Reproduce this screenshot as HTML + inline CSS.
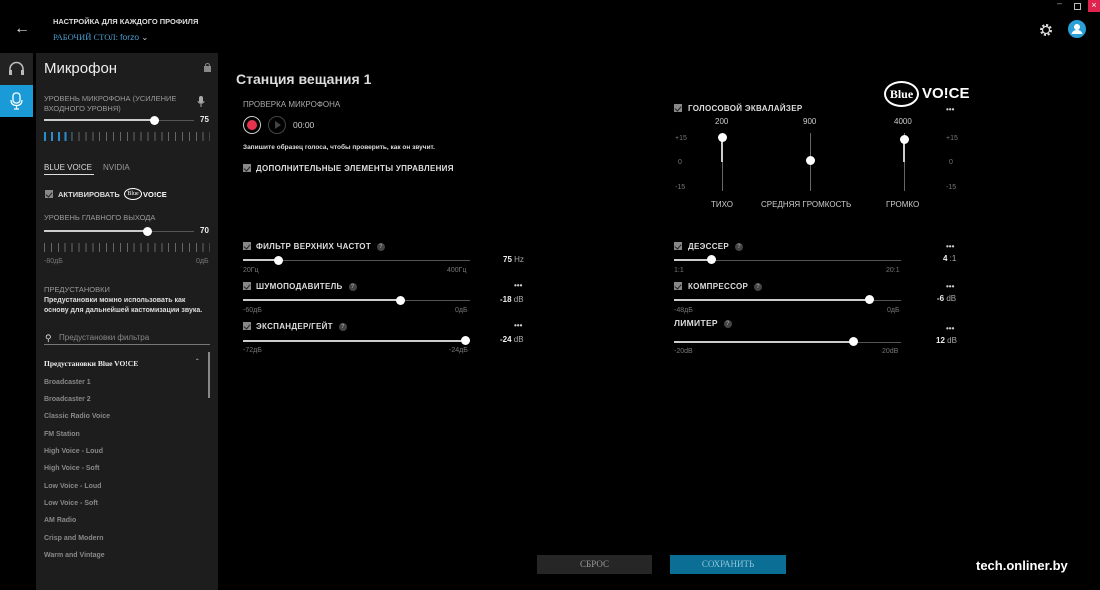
<!DOCTYPE html>
<html><head><meta charset="utf-8"><style>
*{margin:0;padding:0;box-sizing:border-box}
body{width:1100px;height:590px;background:#000;color:#ddd;font-family:"Liberation Sans","Noto Sans CJK SC",sans-serif;position:relative;overflow:hidden}
.a{position:absolute;white-space:nowrap}
.lab{font-size:8px;font-weight:bold;color:#ddd;letter-spacing:.3px}
.sm{font-size:7px;color:#777}
.cb{position:absolute;width:8px;height:8px;background:#888;}
.cb:after{content:"";position:absolute;left:2px;top:1px;width:3px;height:5px;border:solid #222;border-width:0 1px 1px 0;transform:rotate(40deg)}
.tr{position:absolute;height:1px;background:#555}
.fl{position:absolute;height:2px;background:#ccc}
.kn{position:absolute;width:9px;height:9px;border-radius:50%;background:#fff}
.q{display:inline-block;width:8px;height:8px;border-radius:50%;background:#444;color:#999;font-size:6px;text-align:center;line-height:8px;margin-left:6px;vertical-align:middle}
.dots{font-size:8px;color:#ccc;font-weight:bold;letter-spacing:0}
.val{font-size:8px;font-weight:bold;color:#eee}
.val span{font-weight:normal;color:#aaa}
.preset{position:absolute;left:44px;font-size:7px;color:#888;font-weight:bold}
</style></head><body>
<!-- top -->
<div class="a" style="left:14px;top:20px;font-size:16px;color:#ddd">&#8592;</div>
<div class="a lab" style="left:53px;top:17px;font-size:7.5px;letter-spacing:0">НАСТРОЙКА ДЛЯ КАЖДОГО ПРОФИЛЯ</div>
<div class="a" style="left:53px;top:32px;font-size:8.5px;color:#4a9fd0;font-family:'Liberation Serif',serif">РАБОЧИЙ СТОЛ: <span style="font-family:'Liberation Sans'">forzo</span> <span style="color:#ccc">&#8964;</span></div>
<div class="a" style="left:1057px;top:-2px;font-size:9px;color:#aaa">–</div>
<div class="a" style="left:1074px;top:3px;width:7px;height:7px;border:1px solid #bbb"></div>
<div class="a" style="left:1088px;top:0;width:12px;height:12px;background:#e0244f;color:#fff;font-size:9px;text-align:center;line-height:11px">×</div>
<svg class="a" style="left:1038px;top:22px" width="16" height="16" viewBox="0 0 16 16"><circle cx="8" cy="8" r="5" fill="none" stroke="#ddd" stroke-width="2" stroke-dasharray="2.2 1.7"/><circle cx="8" cy="8" r="3.5" fill="none" stroke="#ddd" stroke-width="1.2"/></svg>
<svg class="a" style="left:1068px;top:20px" width="18" height="18" viewBox="0 0 18 18"><circle cx="9" cy="9" r="9" fill="#2a9fd8"/><circle cx="9" cy="7" r="3" fill="#fff"/><path d="M3.5 14c1-3 3-4 5.5-4s4.5 1 5.5 4z" fill="#fff"/></svg>
<!-- icon column -->
<div class="a" style="left:0;top:53px;width:33px;height:32px;background:#222"></div>
<svg class="a" style="left:8px;top:61px" width="17" height="16" viewBox="0 0 17 16"><path d="M2 12V8a6.5 6.5 0 0 1 13 0v4" fill="none" stroke="#bbb" stroke-width="1.6"/><rect x="1" y="9" width="3" height="5" fill="#bbb"/><rect x="13" y="9" width="3" height="5" fill="#bbb"/></svg>
<div class="a" style="left:0;top:85px;width:33px;height:32px;background:#1a9ad6"></div>
<svg class="a" style="left:10px;top:92px" width="13" height="18" viewBox="0 0 13 18"><rect x="3" y="1" width="7" height="10" rx="3" fill="none" stroke="#fff" stroke-width="1.3"/><path d="M1 8c0 4 2.5 5.5 5.5 5.5S12 12 12 8M6.5 13.5V17M4 17h5" fill="none" stroke="#fff" stroke-width="1.2"/></svg>
<!-- side panel -->
<div class="a" style="left:36px;top:53px;width:182px;height:537px;background:#1d1d1d"></div>
<div class="a" style="left:44px;top:60px;font-size:15px;color:#eee">Микрофон</div>
<div class="a" style="left:204px;top:66px;width:7px;height:6px;background:#888"></div>
<div class="a" style="left:205px;top:63px;width:5px;height:5px;border:1px solid #888;border-bottom:none;border-radius:3px 3px 0 0"></div>
<div class="a sm" style="left:44px;top:94px;font-size:7.5px;color:#999;line-height:10px">УРОВЕНЬ МИКРОФОНА (УСИЛЕНИЕ<br>ВХОДНОГО УРОВНЯ)</div>
<svg class="a" style="left:197px;top:96px" width="8" height="12" viewBox="0 0 8 12"><rect x="2" y="0" width="4" height="7" rx="2" fill="#aaa"/><path d="M1 5c0 3 6 3 6 0M4 8v3" stroke="#aaa" fill="none"/></svg>
<div class="tr" style="left:44px;top:120px;width:150px"></div><div class="fl" style="left:44px;top:119px;width:110px"></div><div class="kn" style="left:150px;top:116px"></div>
<div class="a val" style="left:200px;top:115px">75</div>
<div class="a" style="left:44px;top:132px;width:166px;height:9px;background:repeating-linear-gradient(90deg,#666 0 1px,transparent 1px 6.9px)"></div>
<div class="a" style="left:44px;top:132px;width:28px;height:9px;background:repeating-linear-gradient(90deg,#2a8fc8 0 2px,transparent 2px 6.9px)"></div>
<div class="a" style="left:44px;top:163px;font-size:8px;color:#ddd">BLUE VO!CE</div>
<div class="a" style="left:44px;top:174px;width:50px;height:1px;background:#ddd"></div>
<div class="a" style="left:103px;top:163px;font-size:8px;color:#999">NVIDIA</div>
<div class="cb" style="left:45px;top:190px"></div>
<div class="a lab" style="left:58px;top:190px;font-size:7.5px;letter-spacing:0">АКТИВИРОВАТЬ</div>
<div class="a" style="left:124px;top:188px;width:18px;height:12px;border:1px solid #fff;border-radius:50%;font-size:6px;color:#fff;text-align:center;line-height:10px;font-family:'Liberation Serif'">Blue</div>
<div class="a" style="left:143px;top:190px;font-size:7.5px;font-weight:bold;color:#fff">VO!CE</div>
<div class="a sm" style="left:44px;top:213px;font-size:7.5px;color:#999">УРОВЕНЬ ГЛАВНОГО ВЫХОДА</div>
<div class="tr" style="left:44px;top:231px;width:150px"></div><div class="fl" style="left:44px;top:230px;width:104px"></div><div class="kn" style="left:143px;top:227px"></div>
<div class="a val" style="left:200px;top:226px">70</div>
<div class="a" style="left:44px;top:243px;width:166px;height:9px;background:repeating-linear-gradient(90deg,#666 0 1px,transparent 1px 6.9px)"></div>
<div class="a sm" style="left:44px;top:258px">-80дБ</div><div class="a sm" style="left:196px;top:258px">0дБ</div>
<div class="a sm" style="left:44px;top:285px;font-size:7.5px;color:#999">ПРЕДУСТАНОВКИ</div>
<div class="a" style="left:44px;top:296px;font-size:7px;color:#ddd;line-height:10px;white-space:normal;width:160px;font-weight:bold">Предустановки можно использовать как основу для дальнейшей кастомизации звука.</div>
<div class="a" style="left:45px;top:333px;font-size:9px;color:#ddd">&#9906;</div>
<div class="a" style="left:59px;top:333px;font-size:8px;color:#888">Предустановки фильтра</div>
<div class="a" style="left:44px;top:344px;width:166px;height:1px;background:#777"></div>
<div class="a" style="left:44px;top:359px;font-size:7.5px;font-weight:bold;color:#eee;font-family:'Liberation Serif',serif">Предустановки Blue VO!CE</div>
<div class="a" style="left:196px;top:358px;font-size:8px;color:#ccc">&#710;</div>
<div class="a" style="left:208px;top:352px;width:2px;height:46px;background:#888"></div>
<div class="preset" style="top:379px">Broadcaster 1</div>
<div class="preset" style="top:396px">Broadcaster 2</div>
<div class="preset" style="top:413px">Classic Radio Voice</div>
<div class="preset" style="top:431px">FM Station</div>
<div class="preset" style="top:448px">High Voice - Loud</div>
<div class="preset" style="top:465px">High Voice - Soft</div>
<div class="preset" style="top:483px">Low Voice - Loud</div>
<div class="preset" style="top:500px">Low Voice - Soft</div>
<div class="preset" style="top:517px">AM Radio</div>
<div class="preset" style="top:535px">Crisp and Modern</div>
<div class="preset" style="top:552px">Warm and Vintage</div>
<!-- main left -->
<div class="a" style="left:236px;top:71px;font-size:14px;font-weight:bold;color:#ddd">Станция вещания 1</div>
<div class="a" style="left:243px;top:100px;font-size:8px;color:#aaa">ПРОВЕРКА МИКРОФОНА</div>
<div class="a" style="left:243px;top:116px;width:18px;height:18px;border:1px solid #ccc;border-radius:50%"></div>
<div class="a" style="left:247px;top:120px;width:10px;height:10px;border-radius:50%;background:#e8334f"></div>
<div class="a" style="left:268px;top:116px;width:18px;height:18px;border:1px solid #444;border-radius:50%"></div>
<div class="a" style="left:275px;top:121px;width:0;height:0;border-left:6px solid #444;border-top:4px solid transparent;border-bottom:4px solid transparent"></div>
<div class="a" style="left:293px;top:120px;font-size:8.5px;color:#ccc">00:00</div>
<div class="a" style="left:243px;top:144px;font-size:6.5px;color:#ddd;font-weight:bold">Запишите образец голоса, чтобы проверить, как он звучит.</div>
<div class="cb" style="left:243px;top:164px"></div>
<div class="a lab" style="left:256px;top:164px">ДОПОЛНИТЕЛЬНЫЕ ЭЛЕМЕНТЫ УПРАВЛЕНИЯ</div>
<!-- HPF -->
<div class="cb" style="left:243px;top:242px"></div><div class="a lab" style="left:256px;top:242px">ФИЛЬТР ВЕРХНИХ ЧАСТОТ<span class="q">?</span></div>
<div class="tr" style="left:243px;top:260px;width:227px"></div><div class="fl" style="left:243px;top:259px;width:35px"></div><div class="kn" style="left:274px;top:256px"></div>
<div class="a val" style="left:503px;top:255px">75 <span>Hz</span></div>
<div class="a sm" style="left:243px;top:267px">20Гц</div><div class="a sm" style="left:447px;top:267px">400Гц</div>
<div class="cb" style="left:243px;top:282px"></div><div class="a lab" style="left:256px;top:282px">ШУМОПОДАВИТЕЛЬ<span class="q">?</span></div>
<div class="a dots" style="left:514px;top:281px">•••</div>
<div class="tr" style="left:243px;top:300px;width:227px"></div><div class="fl" style="left:243px;top:299px;width:158px"></div><div class="kn" style="left:396px;top:296px"></div>
<div class="a val" style="left:500px;top:295px">-18 <span>dB</span></div>
<div class="a sm" style="left:243px;top:307px">-60дБ</div><div class="a sm" style="left:455px;top:307px">0дБ</div>
<div class="cb" style="left:243px;top:322px"></div><div class="a lab" style="left:256px;top:322px">ЭКСПАНДЕР/ГЕЙТ<span class="q">?</span></div>
<div class="a dots" style="left:514px;top:321px">•••</div>
<div class="tr" style="left:243px;top:341px;width:227px"></div><div class="fl" style="left:243px;top:340px;width:222px"></div><div class="kn" style="left:461px;top:336px"></div>
<div class="a val" style="left:500px;top:335px">-24 <span>dB</span></div>
<div class="a sm" style="left:243px;top:347px">-72дБ</div><div class="a sm" style="left:449px;top:347px">-24дБ</div>
<!-- right EQ -->
<div class="a" style="left:884px;top:81px;width:35px;height:26px;border:2px solid #fff;border-radius:50%;color:#fff;font-family:'Liberation Serif',serif;font-weight:bold;font-size:12px;text-align:center;line-height:22px">Blue</div>
<div class="a" style="left:922px;top:85px;font-size:15px;font-weight:bold;color:#fff">VO!CE</div>
<div class="cb" style="left:674px;top:104px"></div><div class="a lab" style="left:688px;top:104px">ГОЛОСОВОЙ ЭКВАЛАЙЗЕР</div>
<div class="a dots" style="left:946px;top:105px">•••</div>
<div class="a val" style="left:715px;top:117px;font-weight:normal;color:#ccc">200</div>
<div class="a val" style="left:803px;top:117px;font-weight:normal;color:#ccc">900</div>
<div class="a val" style="left:894px;top:117px;font-weight:normal;color:#ccc">4000</div>
<div class="a sm" style="left:675px;top:135px">+15</div><div class="a sm" style="left:678px;top:159px">0</div><div class="a sm" style="left:675px;top:184px">-15</div>
<div class="a sm" style="left:946px;top:135px">+15</div><div class="a sm" style="left:949px;top:159px">0</div><div class="a sm" style="left:946px;top:184px">-15</div>
<div class="a" style="left:722px;top:133px;width:1px;height:58px;background:#666"></div><div class="a" style="left:721px;top:137px;width:2px;height:25px;background:#ccc"></div><div class="kn" style="left:718px;top:133px"></div>
<div class="a" style="left:810px;top:133px;width:1px;height:58px;background:#666"></div><div class="kn" style="left:806px;top:156px"></div>
<div class="a" style="left:904px;top:133px;width:1px;height:58px;background:#666"></div><div class="a" style="left:903px;top:139px;width:2px;height:23px;background:#ccc"></div><div class="kn" style="left:900px;top:135px"></div>
<div class="a" style="left:711px;top:200px;font-size:8px;color:#ccc">ТИХО</div>
<div class="a" style="left:761px;top:200px;font-size:8px;color:#ccc">СРЕДНЯЯ ГРОМКОСТЬ</div>
<div class="a" style="left:886px;top:200px;font-size:8px;color:#ccc">ГРОМКО</div>
<!-- right sliders -->
<div class="cb" style="left:674px;top:242px"></div><div class="a lab" style="left:688px;top:242px">ДЕЭССЕР<span class="q">?</span></div>
<div class="a dots" style="left:946px;top:242px">•••</div>
<div class="tr" style="left:674px;top:260px;width:227px"></div><div class="fl" style="left:674px;top:259px;width:38px"></div><div class="kn" style="left:707px;top:255px"></div>
<div class="a val" style="left:943px;top:254px">4 <span>:1</span></div>
<div class="a sm" style="left:674px;top:267px">1:1</div><div class="a sm" style="left:886px;top:267px">20:1</div>
<div class="cb" style="left:674px;top:282px"></div><div class="a lab" style="left:688px;top:282px">КОМПРЕССОР<span class="q">?</span></div>
<div class="a dots" style="left:946px;top:282px">•••</div>
<div class="tr" style="left:674px;top:300px;width:227px"></div><div class="fl" style="left:674px;top:299px;width:196px"></div><div class="kn" style="left:865px;top:295px"></div>
<div class="a val" style="left:937px;top:294px">-6 <span>dB</span></div>
<div class="a sm" style="left:674px;top:307px">-48дБ</div><div class="a sm" style="left:887px;top:307px">0дБ</div>
<div class="a lab" style="left:674px;top:318px;font-size:8.5px">ЛИМИТЕР<span class="q">?</span></div>
<div class="a dots" style="left:946px;top:324px">•••</div>
<div class="tr" style="left:674px;top:342px;width:227px"></div><div class="fl" style="left:674px;top:341px;width:180px"></div><div class="kn" style="left:849px;top:337px"></div>
<div class="a val" style="left:936px;top:336px">12 <span>dB</span></div>
<div class="a sm" style="left:674px;top:348px">-20dB</div><div class="a sm" style="left:882px;top:348px">20dB</div>
<!-- buttons -->
<div class="a" style="left:537px;top:555px;width:115px;height:19px;background:#262626;color:#999;font-size:9px;text-align:center;line-height:19px;font-family:'Liberation Serif',serif">СБРОС</div>
<div class="a" style="left:670px;top:555px;width:116px;height:19px;background:#0b6e94;color:#8fc4da;font-size:9px;text-align:center;line-height:19px;font-family:'Liberation Serif',serif">СОХРАНИТЬ</div>
<div class="a" style="left:976px;top:558px;font-size:13px;font-weight:bold;color:#fff">tech.onliner.by</div>
</body></html>
